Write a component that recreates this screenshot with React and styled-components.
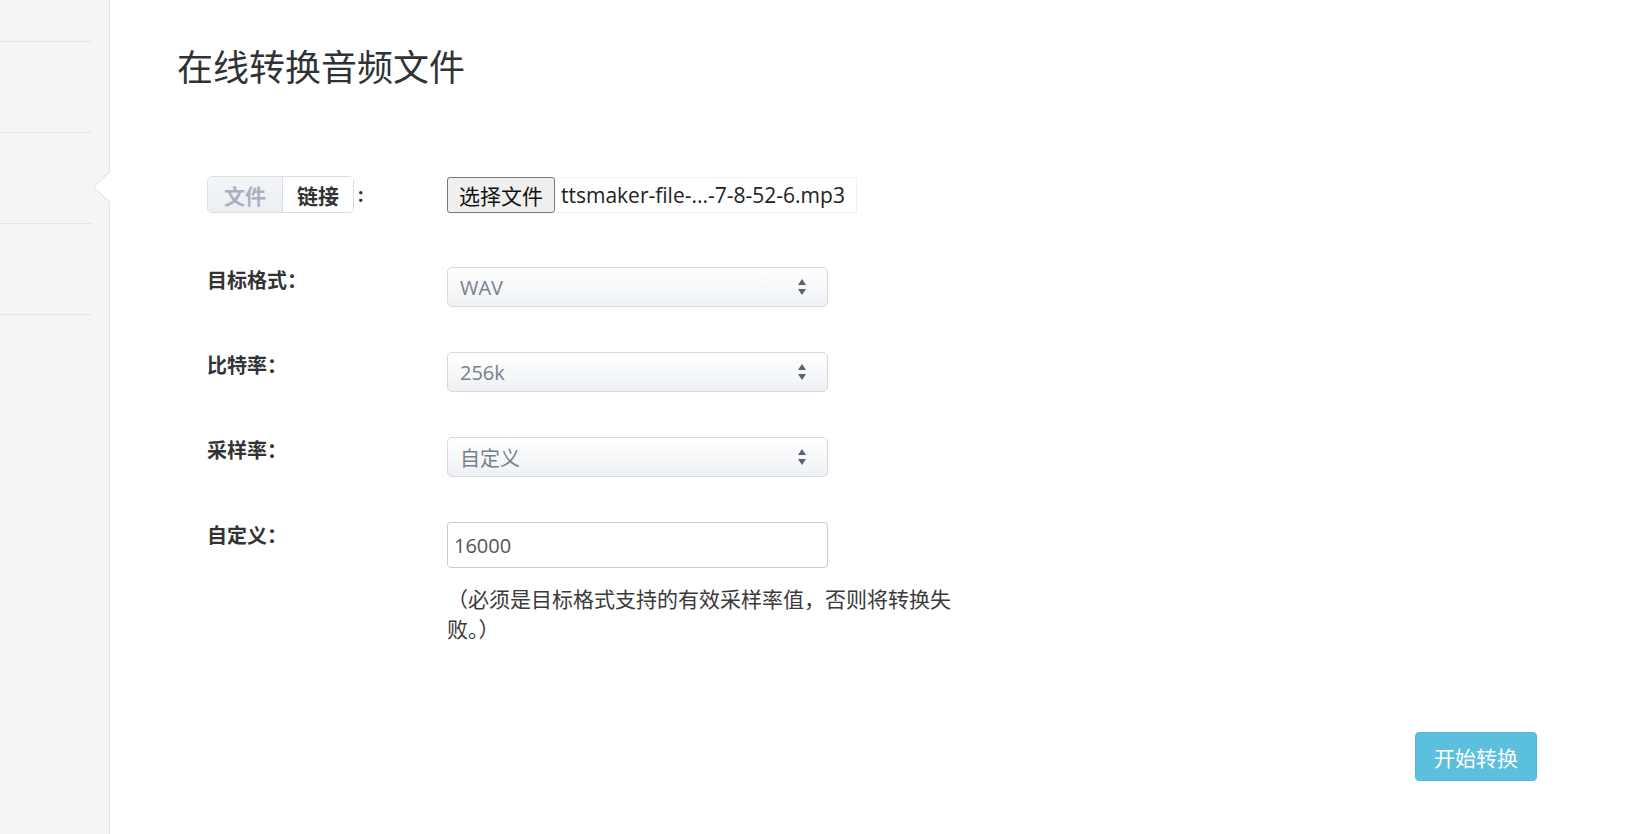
import React from "react";
import styled, { createGlobalStyle } from "styled-components";

const GlobalStyle = createGlobalStyle`
  html, body {
    margin: 0;
    padding: 0;
    background: #fff;
  }
  body {
    font-family: "Open Sans", "Noto Sans CJK SC", sans-serif;
    color: #333;
  }
  * { box-sizing: border-box; }
`;

const Page = styled.div`
  display: flex;
  min-height: 100vh;
`;

const Sidebar = styled.aside`
  width: 110px;
  flex-shrink: 0;
  background: #f5f5f5;
  border-right: 1px solid #e0e3e7;
`;

const SideItem = styled.div`
  position: relative;
  height: ${(p) => p.$h || 91}px;
  margin-right: 18px;
  border-bottom: 1px solid #e1e4e8;
`;

/* little arrow marking the active item, overlaps the sidebar edge */
const Pointer = styled.span`
  position: absolute;
  top: 38px;
  right: -19px;
  width: 0;
  height: 0;
  border-top: 16px solid transparent;
  border-bottom: 16px solid transparent;
  border-right: 17px solid #d3d9e0;

  &::after {
    content: "";
    position: absolute;
    top: -15px;
    left: 1px;
    border-top: 15px solid transparent;
    border-bottom: 15px solid transparent;
    border-right: 16px solid #fff;
  }
`;

const Main = styled.main`
  flex: 1;
  padding: 46px 96px 0 67px;
  display: flex;
  flex-direction: column;
`;

const Title = styled.h1`
  margin: 0;
  font-size: 36px;
  font-weight: 400;
  line-height: 43px;
  color: #2f3337;
`;

const Form = styled.div`
  margin-top: 87px;
  padding-left: 30px;
`;

const Row = styled.div`
  display: grid;
  grid-template-columns: 240px 1fr;
  align-items: ${(p) => (p.$center ? "center" : "start")};
  margin-bottom: ${(p) => p.$gap ?? 46}px;
`;

const Label = styled.div`
  font-size: 20px;
  font-weight: 700;
  line-height: 28px;
  color: #333;
`;

const TabWrap = styled.div`
  display: flex;
  align-items: center;
  gap: 4px;
`;

const Tabs = styled.div`
  display: flex;
  border: 1px solid #d9dee4;
  border-radius: 5px;
  overflow: hidden;
`;

const Tab = styled.button`
  height: 35px;
  width: ${(p) => p.$w}px;
  border: none;
  border-left: ${(p) => (p.$first ? "none" : "1px solid #d9dee4")};
  background: ${(p) => (p.$active ? "linear-gradient(#f3f5f7, #eceff2)" : "#fff")};
  color: ${(p) => (p.$active ? "#a7b1c0" : "#333")};
  font-family: inherit;
  font-size: 21px;
  font-weight: 700;
  padding: 0;
  cursor: pointer;
`;

const Colon = styled.span`
  font-size: 19px;
  font-weight: 700;
`;

const FileField = styled.div`
  display: inline-flex;
  align-items: center;
  width: 410px;
  height: 36px;
  border: 1px solid #f2f2f2;
  border-left: none;
`;

const FileButton = styled.button`
  height: 36px;
  padding: 0 11px;
  border: 1px solid #767676;
  border-radius: 3px;
  background: #efefef;
  font-family: inherit;
  font-size: 21px;
  font-weight: 400;
  color: #111;
  cursor: pointer;
`;

const FileName = styled.span`
  margin-left: 6px;
  font-size: 21px;
  color: #222;
  white-space: nowrap;
`;

const Select = styled.div`
  width: 381px;
  height: 40px;
  display: flex;
  align-items: center;
  justify-content: space-between;
  padding: 0 20px 0 12px;
  border: 1px solid #d4dae0;
  border-radius: 5px;
  background: linear-gradient(#ffffff, #eef1f4);
  font-size: 20px;
  font-weight: 400;
  color: #78808b;
`;

const Field = styled.div`
  display: flex;
  flex-direction: column;
`;

const TextInput = styled.input`
  width: 381px;
  height: 46px;
  padding: 0 6px;
  border: 1px solid #ccc;
  border-radius: 4px;
  font-family: inherit;
  font-size: 20px;
  color: #555;
  outline: none;
`;

const Help = styled.p`
  margin: 16px 0 0;
  width: 510px;
  font-size: 21px;
  font-weight: 400;
  line-height: 30px;
  color: #3a3a3a;
`;

const Actions = styled.div`
  display: flex;
  justify-content: flex-end;
  margin-top: 88px;
`;

const Submit = styled.button`
  height: 49px;
  padding: 0 18px;
  border: 1px solid #4fb9d8;
  border-radius: 4px;
  background: #5bc0de;
  color: #fff;
  font-family: inherit;
  font-size: 21px;
  cursor: pointer;
`;

const Arrows = () => (
  <svg width="10" height="20" viewBox="0 0 10 20">
    <path d="M5 2 L9 8 H1 Z" fill="#5b6270" />
    <path d="M5 18 L9 12 H1 Z" fill="#5b6270" />
  </svg>
);

const selects = [
  { label: "目标格式：", value: "WAV" },
  { label: "比特率：", value: "256k" },
  { label: "采样率：", value: "自定义" },
];

export default function App() {
  return (
    <>
      <GlobalStyle />
      <Page>
        <Sidebar>
          <SideItem $h={42} />
          <SideItem />
          <SideItem>
            <Pointer />
          </SideItem>
          <SideItem />
        </Sidebar>
        <Main>
          <Title>在线转换音频文件</Title>
          <Form>
            <Row $center $gap={54}>
              <TabWrap>
                <Tabs>
                  <Tab $first $active $w={74}>文件</Tab>
                  <Tab $w={71}>链接</Tab>
                </Tabs>
                <Colon>:</Colon>
              </TabWrap>
              <FileField>
                <FileButton>选择文件</FileButton>
                <FileName>ttsmaker-file-...-7-8-52-6.mp3</FileName>
              </FileField>
            </Row>
            {selects.map((s) => (
              <Row key={s.label} $gap={45}>
                <Label>{s.label}</Label>
                <Select>
                  <span>{s.value}</span>
                  <Arrows />
                </Select>
              </Row>
            ))}
            <Row $gap={0}>
              <Label>自定义：</Label>
              <Field>
                <TextInput defaultValue="16000" />
                <Help>（必须是目标格式支持的有效采样率值，否则将转换失败。）</Help>
              </Field>
            </Row>
          </Form>
          <Actions>
            <Submit>开始转换</Submit>
          </Actions>
        </Main>
      </Page>
    </>
  );
}
